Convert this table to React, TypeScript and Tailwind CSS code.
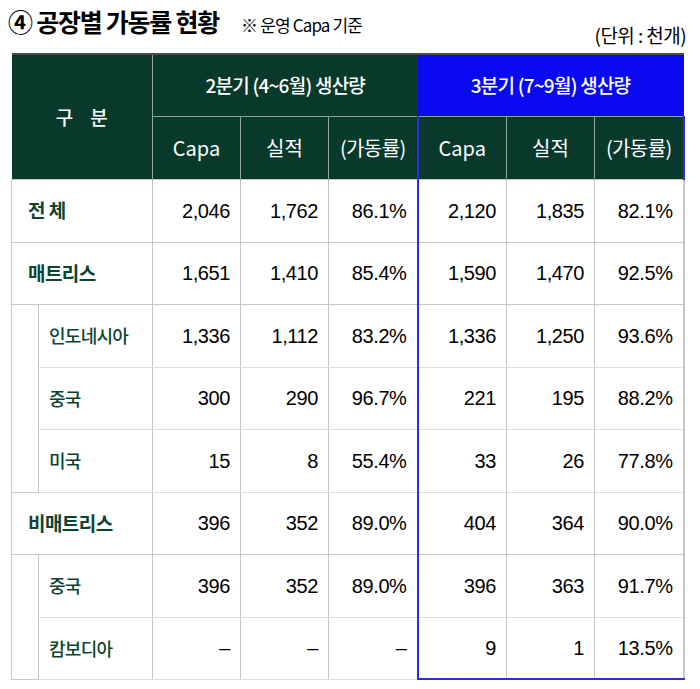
import React from 'react';

type Row = {
  label: string;
  sub?: boolean;
  spacer?: number;
  q2: [string, string, string];
  q3: [string, string, string];
};

const rows: Row[] = [
  { label: '전 체', q2: ['2,046', '1,762', '86.1%'], q3: ['2,120', '1,835', '82.1%'] },
  { label: '매트리스', q2: ['1,651', '1,410', '85.4%'], q3: ['1,590', '1,470', '92.5%'] },
  { label: '인도네시아', sub: true, spacer: 3, q2: ['1,336', '1,112', '83.2%'], q3: ['1,336', '1,250', '93.6%'] },
  { label: '중국', sub: true, q2: ['300', '290', '96.7%'], q3: ['221', '195', '88.2%'] },
  { label: '미국', sub: true, q2: ['15', '8', '55.4%'], q3: ['33', '26', '77.8%'] },
  { label: '비매트리스', q2: ['396', '352', '89.0%'], q3: ['404', '364', '90.0%'] },
  { label: '중국', sub: true, spacer: 2, q2: ['396', '352', '89.0%'], q3: ['396', '363', '91.7%'] },
  { label: '캄보디아', sub: true, q2: ['–', '–', '–'], q3: ['9', '1', '13.5%'] },
];

const kr = { fontFamily: '"Noto Sans CJK KR", "Noto Sans", sans-serif' };
const num = { fontFamily: '"Liberation Sans", Arial, "Noto Sans CJK KR", sans-serif' };

export default function App() {
  return (
    <div className="w-[700px] h-[689px] bg-white overflow-hidden" style={kr}>
      <div className="flex justify-between pl-[8px] h-[53px]">
        <div className="flex items-baseline pt-[3px] gap-[22px]">
          <span className="text-[25px] font-bold tracking-[-0.05em] text-black">④ 공장별 가동률 현황</span>
          <span className="text-[17px] tracking-[-0.05em] text-black">※ 운영 Capa 기준</span>
        </div>
        <div className="self-end pb-[4px] text-[19px] tracking-[-0.03em] text-black pr-[14px]">(단위 : 천개)</div>
      </div>

      <table className="ml-[11px] w-[673px] table-fixed border-collapse">
        <colgroup>
          <col className="w-[27px]" />
          <col className="w-[114px]" />
          <col className="w-[88px]" />
          <col className="w-[88px]" />
          <col className="w-[89px]" />
          <col className="w-[89px]" />
          <col className="w-[88px]" />
          <col className="w-[89px]" />
        </colgroup>
        <thead>
          <tr className="h-[62px] text-white text-[19px]">
            <th colSpan={2} rowSpan={2} className="bg-[#08392b] border-t-2 border-t-[#4a4a4a] border-r border-r-[#8ea59b] font-medium">
              구&nbsp;&nbsp;&nbsp;&nbsp;분
            </th>
            <th colSpan={3} className="bg-[#08392b] border-t-2 border-t-[#4a4a4a] border-b border-b-[#8ea59b] font-medium tracking-[-0.04em]">
              2분기 (4~6월) 생산량
            </th>
            <th colSpan={3} className="bg-[#0a0af2] border-t-2 border-t-[#4a4a4a] border-b border-b-[#8ea59b] font-medium tracking-[-0.04em]">
              3분기 (7~9월) 생산량
            </th>
          </tr>
          <tr className="h-[63px] text-white text-[20px]">
            <th className="bg-[#08392b] border-r border-r-[#8ea59b] font-normal">Capa</th>
            <th className="bg-[#08392b] border-r border-r-[#8ea59b] font-normal">실적</th>
            <th className="bg-[#08392b] font-normal tracking-[-0.03em]">(가동률)</th>
            <th className="bg-[#08392b] border-l-2 border-l-[#2c2ce0] border-r border-r-[#8ea59b] font-normal">Capa</th>
            <th className="bg-[#08392b] border-r border-r-[#8ea59b] font-normal">실적</th>
            <th className="bg-[#08392b] border-r-2 border-r-[#2c2ce0] font-normal tracking-[-0.03em]">(가동률)</th>
          </tr>
        </thead>
        <tbody>
          {rows.map((r, i) => {
            const last = i === rows.length - 1;
            const line = r.sub ? 'border-[#dedede]' : 'border-[#c6c6c6]';
            const cell = `border ${line} border-r-[#c6c6c6] text-right pr-[10px] text-[20px] text-black tracking-[-0.02em]`;
            const blueBottom = last ? 'border-b-2 border-b-[#2c2ce0]' : '';
            return (
              <tr key={i} className={i % 2 === 0 ? 'h-[63px]' : 'h-[62px]'}>
                {r.spacer && (
                  <td rowSpan={r.spacer} className="border border-[#c6c6c6]" />
                )}
                {r.sub ? (
                  <td className={`border ${line} border-r-[#c6c6c6] pl-[10px] text-[18px] font-medium text-[#0c4430] tracking-[-0.04em]`}>
                    {r.label}
                  </td>
                ) : (
                  <td colSpan={2} className="border border-[#c6c6c6] pl-[16px] text-[19px] font-bold text-[#0c4430] tracking-[-0.03em]">
                    {r.label}
                  </td>
                )}
                {r.q2.map((v, j) => (
                  <td key={`a${j}`} className={cell} style={num}>
                    {v}
                  </td>
                ))}
                {r.q3.map((v, j) => (
                  <td
                    key={`b${j}`}
                    className={`${cell} ${blueBottom} ${j === 0 ? 'border-l-2 border-l-[#2c2ce0]' : ''} ${j === 2 ? 'border-r-2 border-r-[#2c2ce0]' : ''}`}
                    style={num}
                  >
                    {v}
                  </td>
                ))}
              </tr>
            );
          })}
        </tbody>
      </table>
    </div>
  );
}
